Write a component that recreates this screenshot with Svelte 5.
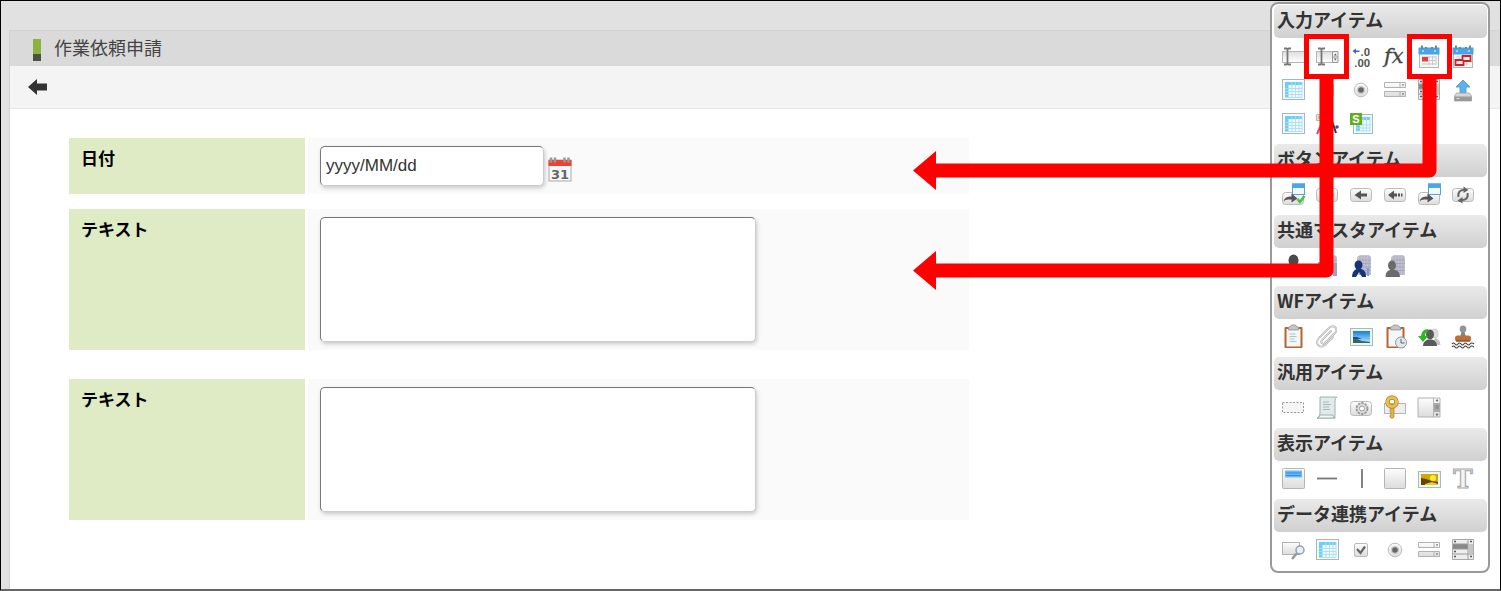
<script lang="ts">
	interface Tool {
		icon: string;
		label: string;
	}

	interface Group {
		title: string;
		tools: Tool[];
	}

	const tool = (icon: string, label: string): Tool => ({ icon, label });

	const groups: Group[] = [
		{
			title: '入力アイテム',
			tools: [
				tool('textbox', '文字列'),
				tool('spinbox', '複数行文字列'),
				tool('decimal', '数値'),
				tool('formula', '関数'),
				tool('calendar', '日付'),
				tool('period', '期間'),
				tool('grid', '一覧選択'),
				tool('checkbox', 'チェックボックス'),
				tool('radio', 'ラジオボタン'),
				tool('selects', 'セレクトボックス'),
				tool('listbox', 'リストボックス'),
				tool('upload', 'ファイルアップロード'),
				tool('grid', 'グリッドテーブル'),
				tool('hidden', '隠しパラメータ'),
				tool('sheet', 'スプレッドシート')
			]
		},
		{
			title: 'ボタンアイテム',
			tools: [
				tool('register', '登録'),
				tool('next', '次へ'),
				tool('back', '戻る'),
				tool('list', '一覧へ戻る'),
				tool('open', '画面遷移'),
				tool('refresh', '更新')
			]
		},
		{
			title: '共通マスタアイテム',
			tools: [
				tool('user', 'ユーザ選択'),
				tool('building', '組織選択'),
				tool('orgUser', '所属組織選択'),
				tool('orgPerson', '組織ユーザ選択')
			]
		},
		{
			title: 'WFアイテム',
			tools: [
				tool('clipboard', '案件情報'),
				tool('clip', '添付ファイル'),
				tool('image', 'フロー画像'),
				tool('history', '処理履歴'),
				tool('agents', '処理対象者'),
				tool('stamp', '印影')
			]
		},
		{
			title: '汎用アイテム',
			tools: [
				tool('dashed', '領域'),
				tool('script', 'スクリプト'),
				tool('event', 'イベントボタン'),
				tool('key', 'キー項目'),
				tool('frame', 'インラインフレーム')
			]
		},
		{
			title: '表示アイテム',
			tools: [
				tool('header', '見出し'),
				tool('hline', '横線'),
				tool('vline', '縦線'),
				tool('box', '矩形'),
				tool('photo', '画像'),
				tool('label', 'ラベル')
			]
		},
		{
			title: 'データ連携アイテム',
			tools: [
				tool('search', '検索'),
				tool('grid', '一覧表'),
				tool('checkbox', 'チェックボックス'),
				tool('radio', 'ラジオボタン'),
				tool('selects', 'セレクトボックス'),
				tool('listbox', 'リストボックス')
			]
		}
	];

	const ibeam = '<path d="M3 4.500h2.500l1 1 1-1H10M3 20.500h2.500l1-1 1 1H10M6.500 5v15" fill="none" stroke="#777" stroke-width="1.800"/>';
	const buttonBody = '<rect x="1.500" y="5.500" width="21" height="13" rx="3" fill="url(#g-metal)" stroke="#bbb"/>';
	const lowButton = '<rect x="1.500" y="9.500" width="21" height="12" rx="3" fill="url(#g-metal)" stroke="#bbb"/>';
	const miniWindow = '<rect x="11.500" y="1" width="12" height="10.500" fill="#f2f7fc" stroke="#5b9fdc"/><path d="M11 .5h13V5H11z" fill="#4ba5ea"/>';
	const jumpArrow = '<path d="M2.500 18.500c1-4 4-5 8-5v-3l6 5-6 4v-3c-4 0-6 0-8 2z" fill="#555"/>';
	const boardBase = '<rect x="3.500" y="2" width="18" height="21" rx="1" fill="#b76435"/><path d="M5.500 4h14v17.500h-14z" fill="#f3f7f7"/><path d="M7.500 5V2.500q0-1 2-1l1-1.500h4l1 1.500q2 0 2 1V5z" fill="#c4c4c4" stroke="#888" stroke-width=".7"/>';
	const tower = '<path d="M8 3l3-2h9l2 2v18H8z" fill="#c3c3d2"/><path d="M11 2v19M14 2v19M17 2v19M20 2v19M8 6h14M8 9.500h14M8 13h14M8 16.500h14" stroke="#a3a3ba" stroke-width=".8"/>';
	const calendarBase = '<rect x="2.500" y="5.500" width="19" height="18" fill="#f6f6f6" stroke="#b5b5b5"/><path d="M1.500 3.500h21v7h-21z" fill="#46a5e6"/><path d="M5 5V1.500M9 5V3M15 5V3M19 5V1.500" stroke="#6e8796" stroke-width="2"/><path d="M5 7h2M17 7h2" stroke="#c2e3fa" stroke-width="1.500"/>';

	const icons: Record<string, string> = {
		textbox: `<rect x="1.500" y="7.500" width="22" height="11" fill="url(#g-field)" stroke="#b5b5b5"/>${ibeam}`,
		spinbox: `<rect x="1.500" y="7.500" width="21" height="11" fill="url(#g-field)" stroke="#b5b5b5"/>${ibeam}<path d="M17.500 7.500h5.500v11h-5.500zM17.500 13h5.500" fill="#eee" stroke="#999"/><path d="M19 11.500l1.300-2 1.300 2zM19 14.500l1.300 2 1.300-2z" fill="#555"/>`,
		decimal:
			'<path d="M3.500 7l3.500-2.500v2h3.500v1.500H7V10z" fill="#3f62d0"/><text x="21" y="12" text-anchor="end" font-family="Roboto, sans-serif" font-weight="700" font-size="11" fill="#555">.0</text><text x="21" y="23" text-anchor="end" font-family="Roboto, sans-serif" font-weight="700" font-size="11" fill="#555">.00</text>',
		formula:
			'<text x="1" y="19" font-family="DejaVu Serif, serif" font-style="italic" font-size="21" fill="#444" stroke="#444" stroke-width=".3">fx</text>',
		calendar: `${calendarBase}<path d="M5 13h14M5 16.500h14M5 20h14M12 12v9M15.500 12v9M19 12v9" stroke="#c9c9c9"/><path d="M5 13h6v4.500H5z" fill="#e2413a"/>`,
		period: `${calendarBase}<path d="M5 13h13M5 16.500h13M5 20h13M8 12v9M15.500 12v9" stroke="#d5d5d5"/><path d="M4.500 16h7v-4h8v5h-7v4h-8z" fill="#fbeaea" stroke="#cf2323" stroke-width="1.800"/>`,
		grid: '<rect x="1.500" y="1.500" width="22" height="20" fill="#f4fafd" stroke="#a5b8bc"/><path d="M4 4h17v3H4zM4 4h3.500v15H4z" fill="#6ccdf5"/><path d="M4 10.500h17M4 13.500h17M4 16.500h17M4 19.500h17M11 4v15.500M14.500 4v15.500M18 4v15.500M21 4v15.500" stroke="#a9ddf5" stroke-width=".9"/>',
		checkbox: '<rect x="5.500" y="5.500" width="13" height="13" rx="1.500" fill="url(#g-metal)" stroke="#bbb"/><path d="M8 11l3.500 4L16 8.500" fill="none" stroke="#666" stroke-width="2.200"/>',
		radio: '<circle cx="12" cy="12" r="6.800" fill="url(#g-metal)" stroke="#bbb"/><circle cx="12" cy="12" r="4.200" fill="#ccc"/><circle cx="12" cy="12" r="2.800" fill="#666"/>',
		selects:
			'<path d="M1.500 4.500h21v5h-21zM1.500 13.500h21v5h-21z" fill="url(#g-metal)" stroke="#b2b2b2"/><path d="M17 4.500v5M17 13.500v5" stroke="#b2b2b2"/><path d="M19 6.200h2l-1 2zM19 15.200h2l-1 2z" fill="#666"/>',
		listbox:
			'<path d="M1.500 1.500h21v20h-21z" fill="#eee" stroke="#aaa"/><path d="M2 6h15v5H2z" fill="#888"/><path d="M1.500 6h15.500M1.500 11h15.500M1.500 16h21M17 2v19.500" stroke="#9a9a9a"/><path d="M17.500 6H22v10h-4.500z" fill="#c4c4c4"/><path d="M3 3.500h2M3 13.500h2M3 18.500h2M19 3.500h2M19 18.500h2" stroke="#555" stroke-width="1.500"/>',
		upload:
			'<path d="M12 2L19 9h-4v6H9V9H5z" fill="#5fb0ee" stroke="#4592d0" stroke-width=".8"/><path d="M5.500 15h13l2 3v5h-17v-5z" fill="#d6d6d6" stroke="#a5a5a5" stroke-width=".8"/><path d="M3.500 18.500h17V23h-17z" fill="#999"/><path d="M5.500 20.500h3" stroke="#ddd"/>',
		hidden:
			'<path d="M1.500 2.500h13v6h-13z" fill="#e8e1dc" stroke="#b5b5b5"/><path d="M3 4h4v3H3z" fill="#f0b34c"/><path d="M2 22l4-9 3 9" fill="none" stroke="#f0357b" stroke-width="2"/><path d="M14 21l4-9 3 9" fill="none" stroke="#333" stroke-width="2"/><circle cx="22" cy="15" r="1.800" fill="#304fc4"/>',
		sheet:
			'<rect x="4.500" y="2.500" width="19" height="19" fill="#f4fafd" stroke="#a5b8bc"/><path d="M13 5h8v3h-8zM7 12h4v7H7z" fill="#6ccdf5"/><path d="M7 13h14M7 16h14M7 19h14M14 5v14M17.500 5v14M21 5v14" stroke="#a9ddf5"/><rect x="1" y="1" width="12" height="12" fill="#63ae1f"/><text x="7" y="11" text-anchor="middle" font-family="Liberation Sans, sans-serif" font-weight="700" font-size="11" fill="#fff">S</text>',
		register: `${lowButton}${miniWindow}${jumpArrow}<path d="M16.500 16l2.500 3 4.500-6" fill="none" stroke="#48c048" stroke-width="2.500"/>`,
		next: `${buttonBody}<path d="M6 10.500h7v-3l6 4.500-6 4.500v-3H6z" fill="#666"/>`,
		back: `${buttonBody}<path d="M18 10.500h-6v-3L5.500 12l6.500 4.500v-3h6z" fill="#555"/>`,
		list: `${buttonBody}<path d="M14 10.500h-3v-3L5 12l6 4.500v-3h3zM15 10.500h2v3h-2zM18 10.500h1.500v3H18z" fill="#555"/>`,
		open: `${lowButton}${miniWindow}${jumpArrow}`,
		refresh: `${buttonBody}<path d="M7.500 14c-1-5 2-7.500 6-7M16.500 10c1 5-2 7.500-6 7" fill="none" stroke="#666" stroke-width="2"/><path d="M12.500 3.500l5 3.500-5 3zM11.500 14l-5 3.500 5 3z" fill="#666"/>`,
		user: '<ellipse cx="12.500" cy="6.500" rx="5" ry="6" fill="#4a4a4a"/><path d="M3 23c0-7 4-9 9-9s9 2 9 9z" fill="#4a4a4a"/>',
		building: `${tower}<path d="M3 8h6v13H3z" fill="#a0a0b6"/><path d="M18 9h4v13h-4z" fill="#a0a0b6"/>`,
		orgUser: `${tower}<ellipse cx="9.500" cy="11" rx="4" ry="4.500" fill="#173477"/><path d="M3 23q0-6 4.500-8h5q5 2 4.500 8h-4l-3-5-3 5z" fill="#173477"/><path d="M19 14v8" stroke="#7b9fd4" stroke-width="2"/>`,
		orgPerson: `${tower}<ellipse cx="9" cy="11.500" rx="4" ry="5" fill="#6b6b6b"/><path d="M2.500 23q0-6 4.500-7h5q5 1 5 7z" fill="#6b6b6b"/>`,
		clipboard: `${boardBase}<path d="M8.500 9h6M8.500 11.500h7M8.500 14h5M8.500 16.500h7" stroke="#b1c3c3"/>`,
		clip: '<g fill="none" stroke-linecap="round"><path d="M16 6L7 15c-2 3 1 5 3 3L20 8c4-5-2-9-6-5L4 13c-5 6 1 11 6 7l8-8" stroke="#b5b5b5" stroke-width="1.900"/><path d="M16 6L7 15c-2 3 1 5 3 3L20 8c4-5-2-9-6-5L4 13c-5 6 1 11 6 7l8-8" stroke="#eee" stroke-width=".7"/></g>',
		image:
			'<rect x="1.500" y="3.500" width="22" height="17" fill="#eff5f5" stroke="#aabbc0"/><path d="M4 6h17v12H4z" fill="url(#g-sky)"/><path d="M4 14l4 0 5 2 8 1v1H4z" fill="#35675f"/><path d="M4 12l4 0 5 2-9 0z" fill="#1d5187"/>',
		history: `${boardBase}<circle cx="18" cy="17.500" r="5.500" fill="#e2e7e7" stroke="#919b9b"/><path d="M18 14v4h3.500" fill="none" stroke="#666"/>`,
		agents:
			'<ellipse cx="17.500" cy="8.500" rx="3.500" ry="4.500" fill="#ddd" stroke="#bbb" stroke-width=".6"/><path d="M15 20l3-7q5 1 5.500 7z" fill="#c4c4c4"/><ellipse cx="13" cy="9.500" rx="4" ry="5" fill="#5a5a5a"/><path d="M6 21q0-5 5-6.500h4q5 1.500 5 6.500z" fill="#5a5a5a"/><path d="M11 4Q5 4 4 11H1l5 6 5-6H8q0-4 3-4z" fill="#2cb81f"/>',
		stamp:
			'<ellipse cx="12" cy="4" rx="3.300" ry="3.500" fill="#949494"/><path d="M10.500 7h3l1.500 5H9z" fill="#858585"/><rect x="4" y="10.500" width="16" height="6" rx="2.500" fill="#bd6f3c"/><path d="M5 16h14" stroke="#814019"/><path d="M1 19q1.500-2 3 0t3 0 3 0 3 0 3 0 3 0 4 0M1 22q1.500-2 3 0t3 0 3 0 3 0 3 0 3 0 4 0" fill="none" stroke="#444" stroke-width="1.200"/>',
		dashed: '<rect x="1.500" y="6.500" width="21" height="10" fill="#f5f5f5" stroke="#999" stroke-dasharray="2 1.500"/>',
		script:
			'<path d="M5 1h17q-2 1-2 4v17H2q3-1 3-5z" fill="#e2eaea" stroke="#9fb0b0"/><path d="M2 22q2 0 3-3h13q0 3 2 3z" fill="#f5f8f8" stroke="#9fb0b0"/><path d="M8 6h6M8 8.500h8M8 11h6M8 13.500h7" stroke="#a3b8b8"/>',
		event: `<rect x="1.500" y="5.500" width="21" height="14" rx="3" fill="url(#g-metal)" stroke="#bbb"/><circle cx="13" cy="12.500" r="5.500" fill="#ddd" stroke="#999" stroke-width="1.800" stroke-dasharray="2.500 1"/><circle cx="13" cy="12.500" r="2.500" fill="#fff" stroke="#999"/>`,
		key: '<rect x="1.500" y="7.500" width="21" height="10" fill="#eee" stroke="#b5b5b5"/><path d="M7.500 9h3.500v12l-2 1.500L7 21v-2l1.500-1L7 16z" fill="#e0b548" stroke="#aa822a" stroke-width=".7"/><circle cx="9" cy="6" r="4.500" fill="none" stroke="#aa822a" stroke-width="4.400"/><circle cx="9" cy="6" r="4.500" fill="none" stroke="#e8be50" stroke-width="3.200"/>',
		frame:
			'<path d="M1 2h22v19H1z" fill="url(#g-metal)" stroke="#b2b2b2"/><path d="M16.500 2v19" stroke="#b2b2b2"/><path d="M17 7h6v9h-6z" fill="#aaa"/><path d="M19 5l1-1.500L21 5zM19 18l1 1.500 1-1.500zM18.500 10h3M18.500 12h3" fill="#555" stroke="#666" stroke-width=".7"/>',
		header:
			'<rect x="1.500" y="1.500" width="22" height="20" rx="1" fill="url(#g-metal)" stroke="#b5b5b5"/><path d="M4 3.500h17v7H4z" fill="#6bbafa"/><path d="M5 6h15M5 8.500h15" stroke="#2f8be2"/>',
		hline: '<path d="M2 11.500h20" stroke="#777" stroke-width="1.800"/>',
		vline: '<path d="M13 2v19" stroke="#777" stroke-width="1.800"/>',
		box: '<rect x="1.500" y="1.500" width="21" height="20" rx="1" fill="url(#g-metal)" stroke="#b5b5b5"/>',
		photo:
			'<rect x="1.500" y="4.500" width="22" height="16" fill="#eff5f5" stroke="#a4bbc0"/><path d="M4 7h17v11H4z" fill="#d1a900"/><path d="M4 11l5 1 6 2 6 1v3H4z" fill="#604700"/><circle cx="16" cy="11" r="3" fill="#ffea3a"/><path d="M8 17l7-2 6 2v1H8z" fill="#ebca27"/>',
		label:
			'<text x="12" y="21" text-anchor="middle" font-family="DejaVu Serif, serif" font-weight="700" font-size="26" fill="#f4f4f4" stroke="#aaa" stroke-width="1.200">T</text>',
		search:
			'<rect x="1.500" y="4.500" width="17" height="12" fill="url(#g-metal)" stroke="#b2b2b2"/><path d="M16 15l-5 6" stroke="#999" stroke-width="2.500"/><circle cx="19" cy="12" r="4" fill="#e5f0f8" stroke="#91a2b0" stroke-width="1.500"/>'
	};

	const textareas = ['text1', 'text2'];

	let date = $state('yyyy/MM/dd');
</script>

<svg class="defs" aria-hidden="true">
	<defs>
		<linearGradient id="g-metal" x1="0" y1="0" x2="0" y2="1">
			<stop offset="0" stop-color="#fdfdfd" />
			<stop offset="1" stop-color="#dcdcdc" />
		</linearGradient>
		<linearGradient id="g-field" x1="0" y1="0" x2="0" y2="1">
			<stop offset="0" stop-color="#ddd" />
			<stop offset="1" stop-color="#fff" />
		</linearGradient>
		<linearGradient id="g-sky" x1="0" y1="0" x2="0" y2="1">
			<stop offset="0" stop-color="#1580d8" />
			<stop offset="1" stop-color="#b2e7ff" />
		</linearGradient>
	</defs>
</svg>

<div class="page">
	<main class="window">
		<header class="title">
			<span class="mark"></span>
			<h1>作業依頼申請</h1>
		</header>
		<nav class="toolbar">
			<button class="back" aria-label="戻る">
				<svg viewBox="0 0 20 18" width="20" height="18">
					<path d="M0 9l9-8v4.500h10v7H9V17z" fill="#333" />
				</svg>
			</button>
		</nav>

		<form class="form">
			<div class="row date-row">
				<label for="date">日付</label>
				<div class="field">
					<input id="date" type="text" bind:value={date} />
					<button class="picker" type="button" aria-label="カレンダー">
						<svg viewBox="0 0 24 26" width="24" height="26">
							<rect x="1" y="4" width="22" height="21" fill="#f7f7f7" stroke="#aaa" />
							<path d="M0.500 4h23v6h-23z" fill="#f04130" />
							<path d="M3 1.500v5M7 1.500v5M16.500 1.500v5M20.500 1.500v5" stroke="#999" stroke-width="2.500" />
							<text x="12" y="23" text-anchor="middle">31</text>
						</svg>
					</button>
				</div>
			</div>
			{#each textareas as id}
				<div class="row text-row">
					<label for={id}>テキスト</label>
					<div class="field">
						<textarea {id}></textarea>
					</div>
				</div>
			{/each}
		</form>
	</main>

	<aside class="palette">
		{#each groups as group}
			<section>
				<h2>{group.title}</h2>
				<div class="tools">
					{#each group.tools as item}
						<button aria-label={item.label}>
							<svg viewBox="0 0 24 24" width="24" height="24">{@html icons[item.icon]}</svg>
						</button>
					{/each}
				</div>
			</section>
		{/each}

		<!-- callouts from the palette to the fields -->
		<svg class="callouts" viewBox="0 0 580 300" width="580" height="300" aria-hidden="true">
			<g fill="none" stroke="#f00">
				<rect x="396.500" y="36.500" width="40" height="40" stroke-width="5" />
				<rect x="499.500" y="36.500" width="40" height="40" stroke-width="5" />
				<path d="M416.500 77v193.500H25" stroke-width="14" stroke-linejoin="round" />
				<path d="M519.500 77v93.500H25" stroke-width="14" stroke-linejoin="round" />
			</g>
			<path d="M3 170.500L26 151v39zM3 270.500L26 251v39z" fill="#f00" />
		</svg>
	</aside>
</div>

<style>
	:global(body) {
		margin: 0;
	}

	.defs {
		position: absolute;
		width: 0;
		height: 0;
	}

	.page {
		position: relative;
		display: flex;
		box-sizing: border-box;
		min-height: 100vh;
		padding: 29px 0 0 8px;
		border: 1px solid #000;
		border-bottom: 2px solid #666;
		background: #e1e1e1;
		font-family: 'Noto Sans CJK JP', sans-serif;
		overflow: hidden;
	}

	.window {
		flex: 1;
		border-left: 1px solid #d3d3d3;
		background: #fff;
	}

	button {
		display: flex;
		align-items: center;
		justify-content: center;
		padding: 0;
		border: 0;
		background: none;
		cursor: pointer;
	}

	button svg {
		overflow: visible;
	}

	.title {
		display: flex;
		align-items: flex-start;
		height: 35px;
		padding-left: 23px;
		gap: 13px;
		border-top: 1px solid #d3d3d3;
		background: #dadada;
	}

	.mark {
		width: 8px;
		height: 22px;
		margin-top: 8px;
		background: linear-gradient(#8db33f 66%, #4a5340 66%);
	}

	h1 {
		margin: 0;
		font-size: 18px;
		font-weight: 400;
		line-height: 32px;
		color: #444;
	}

	.toolbar {
		display: flex;
		align-items: center;
		height: 42px;
		padding-left: 18px;
		border-bottom: 1px solid #e8e8e8;
		background: #f4f4f4;
	}

	.form {
		max-width: 900px;
		padding: 29px 0 0 59px;
	}

	.row {
		display: flex;
		gap: 3px;
		margin-bottom: 15px;
	}

	.text-row {
		margin-bottom: 29px;
	}

	.row label {
		flex: none;
		box-sizing: border-box;
		width: 236px;
		padding: 8px 12px;
		background: #deebc5;
		font-size: 17px;
		font-weight: 700;
		line-height: 24px;
		color: #000;
	}

	.field {
		display: flex;
		flex: 1;
		align-items: center;
		gap: 4px;
		padding: 8px 12px;
		background: #fafafa;
	}

	input,
	textarea {
		box-sizing: border-box;
		margin: 0;
		border: 1px solid;
		border-color: #777 #ccc #ccc #777;
		border-radius: 5px;
		background: #fff;
		box-shadow: 1px 2px 4px rgba(0, 0, 0, 0.2);
		font-family: 'Liberation Sans', sans-serif;
		font-size: 17px;
		color: #333;
		outline: none;
	}

	input {
		width: 224px;
		height: 40px;
		padding: 0 5px;
	}

	textarea {
		width: 436px;
		height: 125px;
		padding: 5px;
		resize: none;
	}

	.picker {
		margin-top: 6px;
	}

	.picker text {
		font-family: 'DejaVu Sans', sans-serif;
		font-size: 13px;
		font-weight: 700;
		fill: #666;
	}

	.palette {
		position: absolute;
		top: 1px;
		right: 10px;
		box-sizing: border-box;
		width: 220px;
		padding: 1px;
		border: 2px solid #999;
		border-radius: 8px;
		background: #fff;
	}

	h2 {
		margin: 0 0 0 1px;
		padding: 0 3px 4px;
		border-radius: 5px;
		background: linear-gradient(#eaeaea, #d0d0d0);
		font-size: 18px;
		font-weight: 700;
		line-height: 29px;
		color: #333;
	}

	.tools {
		display: grid;
		grid-template-columns: repeat(6, 34px);
		grid-auto-rows: 34px;
		padding: 1px 3px 3px;
	}

	.callouts {
		position: absolute;
		top: -4px;
		right: -2px;
		pointer-events: none;
	}
</style>
